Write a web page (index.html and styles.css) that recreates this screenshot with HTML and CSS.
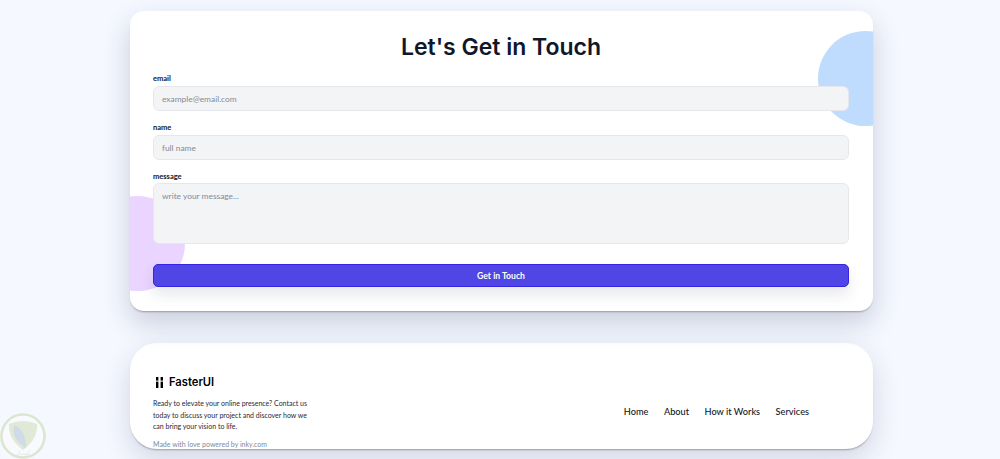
FILE: index.html
```html
<!DOCTYPE html>
<html lang="en">
<head>
    <meta charset="UTF-8">
    <meta name="viewport" content="width=device-width, initial-scale=1.0">
    <title>Let's Get in Touch</title>
    <link rel="stylesheet" href="styles.css">
</head>
<body>
    <div class="page">
        <section class="contact-card">
            <span class="blob blob-blue"></span>
            <span class="blob blob-purple"></span>
            <h1>Let's Get in Touch</h1>
            <form class="contact-form">
                <div class="field">
                    <label for="email">email</label>
                    <input type="text" id="email" placeholder="example@email.com">
                </div>
                <div class="field">
                    <label for="name">name</label>
                    <input type="text" id="name" placeholder="full name">
                </div>
                <div class="field field-message">
                    <label for="message">message</label>
                    <textarea id="message" placeholder="write your message..."></textarea>
                </div>
                <button type="button" class="submit-btn">Get in Touch</button>
            </form>
        </section>

        <footer class="footer-card">
            <div class="footer-inner">
                <div class="footer-info">
                    <div class="logo">
                        <svg class="logo-icon" viewBox="0 0 7 11" width="7" height="11">
                            <rect x="0" y="0" width="2.4" height="3.6"/>
                            <rect x="4.6" y="0" width="2.4" height="3.6"/>
                            <rect x="0" y="4.6" width="2.4" height="6.4"/>
                            <rect x="4.6" y="4.6" width="2.4" height="6.4"/>
                        </svg>
                        <span>FasterUI</span>
                    </div>
                    <p class="blurb">Ready to elevate your online presence? Contact us today to discuss your project and discover how we can bring your vision to life.</p>
                    <p class="made-with">Made with love powered by inky.com</p>
                </div>
                <nav class="footer-nav">
                    <a href="#">Home</a>
                    <a href="#">About</a>
                    <a href="#">How it Works</a>
                    <a href="#">Services</a>
                </nav>
            </div>
        </footer>
    </div>

    <svg class="watermark" viewBox="0 0 46 46" width="46" height="46">
        <circle cx="23" cy="23" r="21.5" fill="#fff" fill-opacity="0.35" stroke="#dbe6cf" stroke-width="2.5"/>
        <path d="M9 11 Q23 5 37 11 Q38 26 23 37 Q8 26 9 11Z" fill="#dfe9d5"/>
        <path d="M14 12 Q26 17 26 35 Q11 26 14 12Z" fill="#cfdbe6"/>
        <text x="23" y="42" text-anchor="middle" class="watermark-text">کسـار</text>
    </svg>
</body>
</html>
```

FILE: styles.css
```css
html, body {
    height: 100%;
}
body {
    margin: 0;
    overflow: hidden;
    background-color: #f5f8ff;
    color: #111827;
    font-family: 'Lato', 'Open Sans', sans-serif;
}
.page {
    width: 743px;
    margin-left: 130px;
    padding-top: 11px;
}
.contact-card {
    position: relative;
    overflow: hidden;
    height: 300px;
    box-sizing: border-box;
    padding: 20px 24px 0 23px;
    background-color: white;
    border-radius: 14px;
    box-shadow: 0 12px 28px rgba(30,40,80,0.2), 0 2px 2px -1px rgba(0,0,0,0.3);
}
.blob {
    position: absolute;
    width: 95px;
    height: 95px;
    border-radius: 50%;
}
.blob-blue {
    top: 20px;
    right: -40px;
    background-color: #bfdbfe;
}
.blob-purple {
    bottom: 20px;
    left: -40px;
    background-color: #e9d5ff;
}
h1 {
    position: relative;
    margin: 0 0 11px;
    text-align: center;
    font-family: 'Inter', sans-serif;
    font-size: 23px;
    line-height: 32px;
    font-weight: 600;
    color: #0f172a;
}
.contact-form {
    position: relative;
    display: flex;
    flex-direction: column;
}
.field {
    display: flex;
    flex-direction: column;
    margin-bottom: 12px;
}
.field label {
    font-size: 7.5px;
    line-height: 10px;
    font-weight: 700;
    margin-bottom: 2px;
}
.field-message label {
    margin-bottom: 1px;
}
.field input, .field textarea {
    box-sizing: border-box;
    width: 100%;
    padding: 0 8px;
    background-color: #f3f4f6;
    border: 1px solid #e5e7eb;
    border-radius: 6px;
    font-family: 'Lato', sans-serif;
    font-size: 8.4px;
    resize: none;
    outline: none;
}
.field input {
    height: 25px;
}
.field textarea {
    height: 61px;
    padding-top: 7px;
    margin-bottom: 8px;
}
.field input::placeholder, .field textarea::placeholder {
    color: #858a96;
}
.submit-btn {
    height: 23px;
    background-color: #4f46e5;
    color: white;
    border: 1px solid #3525e0;
    border-radius: 5px;
    font-family: 'Lato', sans-serif;
    font-size: 8.6px;
    font-weight: 700;
    box-shadow: 0 8px 14px rgba(30,40,80,0.1);
}
.footer-card {
    height: 106px;
    margin-top: 32px;
    overflow: hidden;
    background-color: white;
    border-radius: 27px;
    box-shadow: 0 10px 28px rgba(30,40,80,0.16), 0 2px 2px -1px rgba(0,0,0,0.3);
}
.footer-inner {
    display: flex;
    align-items: flex-start;
    justify-content: space-between;
    padding: 31px 64px 0 23px;
}
.footer-info {
    width: 158px;
}
.logo {
    display: flex;
    align-items: center;
    gap: 6px;
    margin-left: 3px;
    font-family: 'Inter', sans-serif;
    font-size: 11.2px;
    font-weight: 600;
    line-height: 16px;
    color: #000;
}
.logo-icon {
    fill: #000;
}
.blurb {
    margin: 8px 0 0;
    font-size: 7px;
    line-height: 11.5px;
    color: #1f2937;
}
.made-with {
    margin: 6px 0 0;
    font-size: 7px;
    line-height: 10px;
    color: #7d8a9c;
}
.footer-nav {
    display: flex;
    gap: 15.5px;
    margin-top: 32px;
}
.footer-nav a {
    font-size: 9.2px;
    font-weight: 500;
    line-height: 12px;
    color: #111827;
    text-decoration: none;
}
.watermark {
    position: fixed;
    left: 0;
    bottom: 0;
}
.watermark-text {
    font-family: 'DejaVu Sans', sans-serif;
    font-size: 6px;
    fill: #dfe6da;
}
```
